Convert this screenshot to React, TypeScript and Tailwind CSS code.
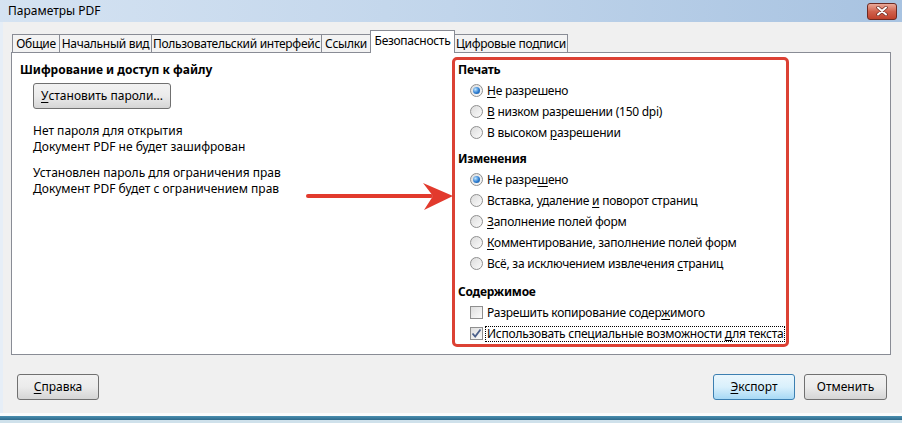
import { type ReactNode } from 'react'

const FONT = "font-['Noto_Sans',sans-serif]"

function Acc({ children }: { children: ReactNode }) {
  return <span className="underline underline-offset-2">{children}</span>
}

function Radio({ checked, children }: { checked?: boolean; children: ReactNode }) {
  return (
    <div className="flex h-[21px] items-center whitespace-nowrap pl-[15px]">
      <span className="flex h-[13px] w-[13px] shrink-0 items-center justify-center rounded-full border border-[#8f8f8f] bg-gradient-to-br from-[#dcdcdc] to-[#fbfbfb]">
        {checked && (
          <span className="h-[7px] w-[7px] rounded-full bg-[radial-gradient(circle_at_35%_35%,#bfe6ff,#2b7bd0_55%,#15508f)]" />
        )}
      </span>
      <span className="ml-[4px] leading-none">{children}</span>
    </div>
  )
}

function Check({ checked, focused, children }: { checked?: boolean; focused?: boolean; children: ReactNode }) {
  return (
    <div className="flex h-[21px] items-center whitespace-nowrap pl-[15px]">
      <span className="flex h-[13px] w-[13px] shrink-0 items-center justify-center border border-[#8f8f8f] bg-gradient-to-br from-[#dedede] to-[#fbfbfb]">
        {checked && (
          <svg width="11" height="11" viewBox="0 0 11 11">
            <path d="M1.5 5.5 L4.2 8.5 L9.5 1.5" fill="none" stroke="#4a5f8a" strokeWidth="1.8" />
          </svg>
        )}
      </span>
      <span
        className={`ml-[3px] px-[1px] leading-[14px] ${focused ? 'outline-1 outline-dotted outline-black' : ''}`}
      >
        {children}
      </span>
    </div>
  )
}

function Button({ children, primary, className = '' }: { children: ReactNode; primary?: boolean; className?: string }) {
  return (
    <button
      type="button"
      className={`flex h-[26px] items-center justify-center whitespace-nowrap rounded-[3px] border ${
        primary
          ? 'border-[#3c7fb1] bg-gradient-to-b from-[#eaf6fd] via-[#d9f0fc] to-[#a7d9f5]'
          : 'border-[#707070] bg-gradient-to-b from-[#f2f2f2] via-[#ebebeb] to-[#d5d5d5]'
      } ${className}`}
    >
      {children}
    </button>
  )
}

const tabs = [
  { label: 'Общие', w: 'w-[48px]' },
  { label: 'Начальный вид', w: 'w-[93px]' },
  { label: 'Пользовательский интерфейс', w: 'w-[171px]' },
  { label: 'Ссылки', w: 'w-[50px]' },
  { label: 'Безопасность', w: 'w-[85px]', active: true },
  { label: 'Цифровые подписи', w: 'w-[114px]' },
]

export default function App() {
  return (
    <div className={`relative flex h-[423px] w-[902px] flex-col overflow-hidden bg-[#f0f0f0] text-[12px] text-black ${FONT}`}>
      {/* title bar */}
      <div className="flex h-[22px] items-center justify-between bg-gradient-to-r from-[#d5e3f2] via-[#c1d5eb] to-[#a8c3e1] pl-[8px] pr-[5px]">
        <span className="text-[12px] leading-none text-black">Параметры PDF</span>
        <span className="flex h-[17px] w-[30px] items-center justify-center rounded-[3px] border border-[#6d2a22] bg-gradient-to-b from-[#e9a99a] via-[#d0614c] to-[#c0412b]">
          <svg width="12" height="10" viewBox="0 0 12 10">
            <path d="M2 1.5 L10 8.5 M10 1.5 L2 8.5" stroke="#6a2a22" strokeWidth="3.4" strokeLinecap="round" />
            <path d="M2 1.5 L10 8.5 M10 1.5 L2 8.5" stroke="#ffffff" strokeWidth="2" strokeLinecap="round" />
          </svg>
        </span>
      </div>

      <div className="flex flex-1 flex-col border-l-[3px] border-[#e6eef7] pl-[8px]">
        {/* tabs */}
        <div className="relative z-10 mt-[8px] flex h-[22px] items-end pl-[1px] tracking-[-0.3px]">
          {tabs.map((t) => (
            <div
              key={t.label}
              className={`${t.w} -mr-px flex items-center justify-center whitespace-nowrap border border-[#898c95] leading-none ${
                t.active ? 'h-[23px] -mb-px border-b-0 bg-white pb-[2px]' : 'h-[18px] border-b-0 bg-[#f3f3f3]'
              }`}
            >
              {t.label}
            </div>
          ))}
        </div>

        {/* panel */}
        <div className="flex h-[303px] w-[880px] border border-[#898c95] bg-white">
          <div className="w-[440px] whitespace-nowrap pl-[8px] pt-[9px]">
            <div className="h-[16px] font-bold leading-[16px]">Шифрование и доступ к файлу</div>
            <Button className="ml-[13px] mt-[5px] w-[138px]">
              <Acc>У</Acc>становить пароли...
            </Button>
            <div className="ml-[13px] mt-[14px] leading-[16px]">
              <div>Нет пароля для открытия</div>
              <div>Документ PDF не будет зашифрован</div>
            </div>
            <div className="ml-[13px] mt-[10px] leading-[16px]">
              <div>Установлен пароль для ограничения прав</div>
              <div>Документ PDF будет с ограничением прав</div>
            </div>
          </div>

          <div className="mt-[4px] h-[290px] w-[337px] rounded-[5px] border-[3px] border-[#dc4134] tracking-[-0.25px]">
            <div className="flex h-[20px] items-center pl-[3px] font-bold">Печать</div>
            <Radio checked>
              <Acc>Н</Acc>е разрешено
            </Radio>
            <Radio>
              <Acc>В</Acc> низком разрешении (150 dpi)
            </Radio>
            <Radio>
              В высоком <Acc>р</Acc>азрешении
            </Radio>

            <div className="mt-[6px] flex h-[20px] items-center pl-[3px] font-bold">Изменения</div>
            <Radio checked>
              Не разре<Acc>ш</Acc>ено
            </Radio>
            <Radio>
              Вставка, удаление <Acc>и</Acc> поворот страниц
            </Radio>
            <Radio>
              <Acc>З</Acc>аполнение полей форм
            </Radio>
            <Radio>
              <Acc>К</Acc>омментирование, заполнение полей форм
            </Radio>
            <Radio>
              Всё, за исключением извлечения <Acc>с</Acc>траниц
            </Radio>

            <div className="mt-[8px] flex h-[20px] items-center pl-[3px] font-bold">Содержимое</div>
            <Check>
              Разрешить копирование содер<Acc>ж</Acc>имого
            </Check>
            <Check checked focused>
              Использовать специальные возможности <Acc>д</Acc>ля текста
            </Check>
          </div>
        </div>

        {/* bottom buttons */}
        <div className="mt-[19px] flex w-[880px] items-center pl-[6px] pr-[4px]">
          <Button className="w-[82px]">
            <Acc>С</Acc>правка
          </Button>
          <div className="flex-1" />
          <Button primary className="w-[82px]">
            <Acc>Э</Acc>кспорт
          </Button>
          <Button className="ml-[9px] w-[83px]">Отменить</Button>
        </div>
      </div>

      {/* window bottom frame */}
      <div className="h-[3px] bg-[#fafcfd]" />
      <div className="h-[4px] bg-gradient-to-b from-[#4b8fb0] to-[#2d6a8c]" />
      <div className="h-[3px] bg-[#cfe1eb]" />

      {/* annotation arrow */}
      <svg className="absolute left-[305px] top-[180px]" width="150" height="32" viewBox="0 0 150 32">
        <line x1="3" y1="16" x2="126" y2="16" stroke="#e23a2d" strokeWidth="4" strokeLinecap="round" />
        <polygon points="118,3 148,16 119,30 128,16" fill="#e23a2d" />
      </svg>
    </div>
  )
}
